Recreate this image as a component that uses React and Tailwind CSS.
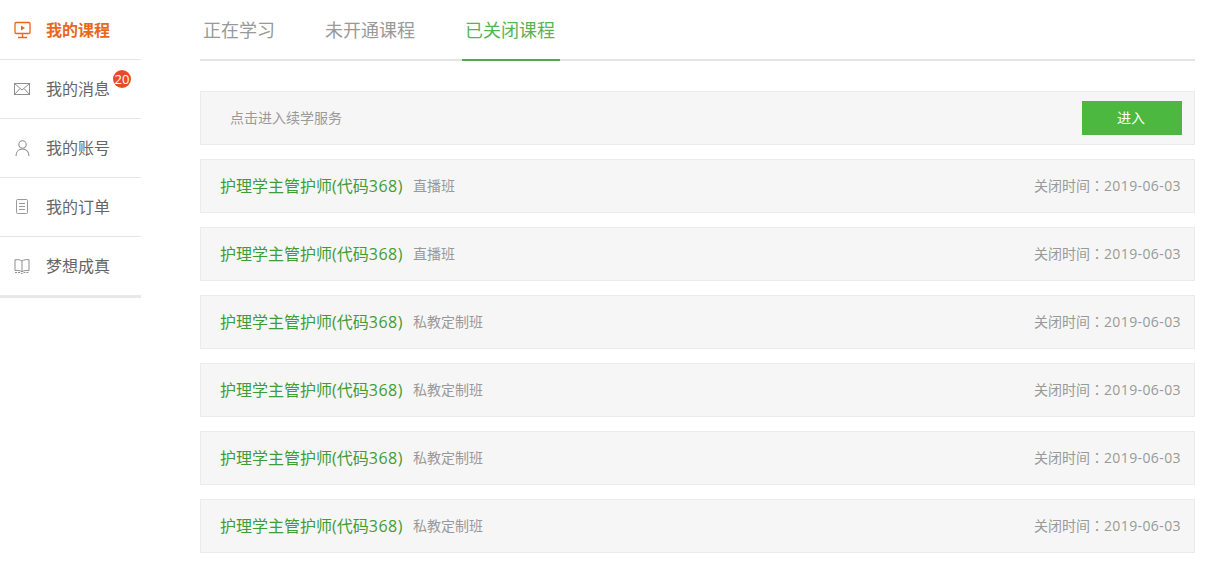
import React from 'react'

const font = "font-['Open_Sans','Noto_Sans_CJK_SC',sans-serif]"

const CourseIcon = () => (
  <svg width="18" height="18" viewBox="0 0 18 18" fill="none" stroke="#e8681a" strokeWidth="1.3">
    <rect x="1" y="1.5" width="15" height="11" rx="1" />
    <path d="M7 4.5v5l4-2.5z" fill="#e8681a" stroke="none" />
    <path d="M8.5 12.5v3.5M4 16.5h9" />
  </svg>
)

const MailIcon = () => (
  <svg width="18" height="18" viewBox="0 0 18 18" fill="none" stroke="#8f8f8f" strokeWidth="1">
    <rect x="0.5" y="3.5" width="15" height="11" />
    <path d="M0.5 3.5l7.500 6.500 7.500-6.500M0.500 14.500l5.500-6M15.500 14.500l-5.500-6" />
  </svg>
)

const UserIcon = () => (
  <svg width="18" height="18" viewBox="0 0 18 18" fill="none" stroke="#8f8f8f" strokeWidth="1.1">
    <circle cx="8.5" cy="5.5" r="3.7" />
    <path d="M2 17c0-4 2.500-7 6.500-7s6.500 3 6.500 7" />
  </svg>
)

const OrderIcon = () => (
  <svg width="18" height="18" viewBox="0 0 18 18" fill="none" stroke="#9a9a9a" strokeWidth="1">
    <rect x="2.500" y="1.500" width="11" height="14" rx="1" />
    <path d="M5 5.500h6M5 8.500h6M5 11.500h6" />
  </svg>
)

const BookIcon = () => (
  <svg width="18" height="18" viewBox="0 0 18 18" fill="none" stroke="#8f8f8f" strokeWidth="1">
    <path d="M8 4c-1.500-1.300-4-1.500-7-1.300v10.800c3-.2 5.500 0 7 1.300 1.500-1.300 4-1.500 7-1.300V2.700c-3-.2-5.500 0-7 1.300zM8 4v11" />
    <path d="M1 15.500h5l2 1.200 2-1.200h5" strokeDasharray="2 1" />
  </svg>
)

const menu = [
  { label: '我的课程', icon: <CourseIcon />, active: true },
  { label: '我的消息', icon: <MailIcon />, badge: '20' },
  { label: '我的账号', icon: <UserIcon /> },
  { label: '我的订单', icon: <OrderIcon /> },
  { label: '梦想成真', icon: <BookIcon /> },
]

const courses = [
  { type: '直播班' },
  { type: '直播班' },
  { type: '私教定制班' },
  { type: '私教定制班' },
  { type: '私教定制班' },
  { type: '私教定制班' },
]

const Sidebar = () => (
  <ul className="w-[141px] shrink-0 pt-px border-b-[3px] border-[#e8e8e8] self-start">
    {menu.map((item, i) => (
      <li
        key={item.label}
        className={`flex items-center pl-[14px] ${i < menu.length - 1 ? 'h-[59px] border-b border-[#e6e6e6]' : 'h-[58px]'}`}
      >
        <span className="w-[32px] shrink-0 flex">{item.icon}</span>
        <span className={`relative text-[16px] ${item.active ? 'font-bold text-[#e8681a]' : 'text-[#666666]'}`}>
          {item.label}
          {item.badge && (
            <span className="absolute left-[67px] top-[-7px] w-[18px] h-[18px] rounded-full bg-[#ea4a2a] text-white text-[13px] leading-[18px] text-center font-normal">
              {item.badge}
            </span>
          )}
        </span>
      </li>
    ))}
  </ul>
)

const Tabs = () => (
  <div className="flex h-[61px] border-b-2 border-[#e4e4e4] text-[18px] text-[#999999]">
    <div className="h-[61px] pl-[3px] pr-[5px] mr-[41px] leading-[60px]">正在学习</div>
    <div className="h-[61px] px-1 mr-[43px] leading-[60px]">未开通课程</div>
    <div className="h-[61px] pl-[3px] pr-[5px] leading-[60px] text-[#55b552] border-b-2 border-[#4fa94d]">已关闭课程</div>
  </div>
)

const App = () => {
  return (
    <div className={`${font} w-[1213px] h-[574px] bg-white flex overflow-hidden`}>
      <Sidebar />
      <div className="w-[995px] ml-[59px]">
        <Tabs />
        <div className="mt-[30px] h-[54px] bg-[#f6f6f6] border border-[#ebebeb] flex items-center justify-between pl-[29px] pr-3">
          <span className="pb-0.5 text-[14px] text-[#999999]">点击进入续学服务</span>
          <button className="w-[100px] h-[34px] pb-0.5 pr-0.5 bg-[#4cb840] text-white text-[14px]">进入</button>
        </div>
        {courses.map((course, i) => (
          <div
            key={i}
            className="mt-[14px] h-[54px] bg-[#f6f6f6] border border-[#ebebeb] flex items-center pl-[19px] pr-[13px]"
          >
            <span className="text-[16px] text-[#3f9c36]">
              护理学主管护师(代码<span className="tracking-[0.5px]">368)</span>
            </span>
            <span className="pb-0.5 ml-[10px] text-[14px] text-[#999999]">{course.type}</span>
            <span className="pb-0.5 ml-auto text-[14px] text-[#999999]">
              关闭时间<span className="font-['Noto_Sans_CJK_TC',sans-serif]">：</span><span className="tracking-[0.4px]">2019-06-03</span>
            </span>
          </div>
        ))}
      </div>
    </div>
  )
}

export default App
